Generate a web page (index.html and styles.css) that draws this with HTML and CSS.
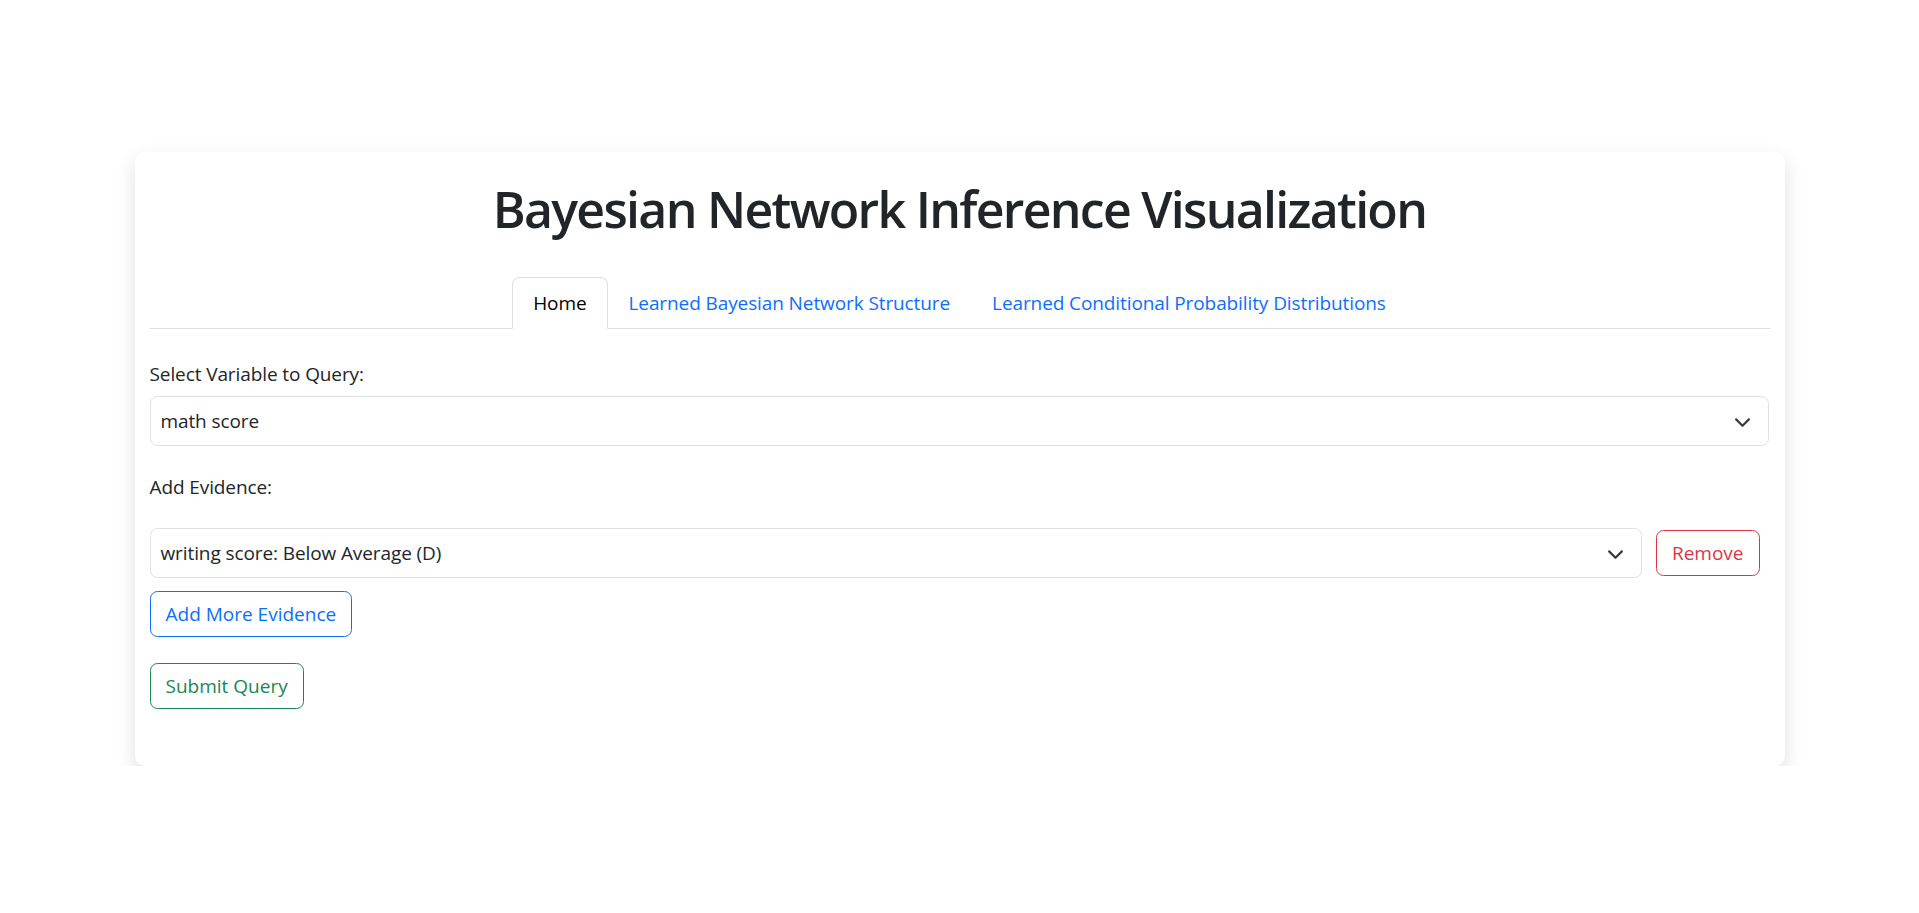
FILE: index.html
```html
<!DOCTYPE html>
<html lang="en">
<head>
<meta charset="utf-8">
<title>Bayesian Network Inference Visualization</title>
<link rel="stylesheet" href="styles.css">
</head>
<body>
<div class="page">
  <div class="card">
    <h1 class="title">Bayesian Network Inference Visualization</h1>
    <ul class="tabs">
      <li><a class="tab active">Home</a></li>
      <li><a class="tab">Learned Bayesian Network Structure</a></li>
      <li><a class="tab">Learned Conditional Probability Distributions</a></li>
    </ul>
    <div class="pane">
      <label class="label label-query">Select Variable to Query:</label>
      <div class="select select-main">
        <span class="select-text">math score</span>
        <svg class="chevron" width="17" height="13" viewBox="0 0 16 12"><path d="m2 4 6 6 6-6" fill="none" stroke="#343a40" stroke-width="2" stroke-linecap="round" stroke-linejoin="round"/></svg>
      </div>
      <div class="label label-evidence">Add Evidence:</div>
      <div class="evidence-row">
        <div class="select">
          <span class="select-text">writing score: Below Average (D)</span>
          <svg class="chevron" width="17" height="13" viewBox="0 0 16 12"><path d="m2 4 6 6 6-6" fill="none" stroke="#343a40" stroke-width="2" stroke-linecap="round" stroke-linejoin="round"/></svg>
        </div>
        <button class="btn btn-danger">Remove</button>
      </div>
      <button class="btn btn-primary">Add More Evidence</button>
      <button class="btn btn-success">Submit Query</button>
    </div>
  </div>
</div>
</body>
</html>
```

FILE: styles.css
```css
html, body {
  margin: 0;
  padding: 0;
  background: #fff;
}

body {
  font-family: "Open Sans", "Noto Sans", sans-serif;
  font-size: 19px;
  letter-spacing: -0.1px;
  line-height: 30px;
  color: #212529;
}

.page {
  width: 1650px;
  margin: 152px auto 0;
}

.card {
  background: #fff;
  border-radius: 10px;
  box-shadow: 0 8px 20px rgba(0, 0, 0, 0.13);
  padding: 27px 15px 57px;
}

.title {
  margin: 0 0 38px;
  font-size: 50px;
  line-height: 60px;
  font-weight: 600;
  letter-spacing: -1.7px;
  text-align: center;
  color: #212529;
}

.tabs {
  list-style: none;
  margin: 0;
  padding: 0;
  display: flex;
  justify-content: center;
  border-bottom: 1px solid #dee2e6;
}

.tab {
  display: block;
  padding: 10px 20px;
  border: 1px solid transparent;
  border-top-left-radius: 7.5px;
  border-top-right-radius: 7.5px;
  margin-bottom: -1px;
  color: #0d6efd;
  text-decoration: none;
  cursor: pointer;
}

.tab.active {
  color: #000;
  background: #fff;
  border-color: #dee2e6 #dee2e6 #fff;
}

.pane {
  padding-top: 30px;
  display: flex;
  flex-direction: column;
  align-items: flex-start;
}

.label {
  display: block;
}

.label-query {
  margin-bottom: 7px;
}

.label-evidence {
  margin-bottom: 26px;
}

.select {
  box-sizing: border-box;
  height: 50px;
  border: 1px solid #dee2e6;
  border-radius: 7.5px;
  background: #fff;
  padding: 0 17px 0 10px;
  display: flex;
  align-items: center;
  justify-content: space-between;
  color: #212529;
}

.select-main {
  align-self: stretch;
  margin-right: 1px;
  margin-bottom: 26px;
}

.chevron {
  display: block;
  flex: none;
}

.evidence-row {
  align-self: stretch;
  display: flex;
  align-items: center;
  margin-bottom: 13px;
}

.evidence-row .select {
  flex: 1;
}

.btn {
  font-family: inherit;
  font-size: 19px;
  letter-spacing: 0;
  line-height: 30px;
  padding: 7px 15px;
  background: transparent;
  border: 1px solid;
  border-radius: 7.5px;
  cursor: pointer;
}

.btn-danger {
  color: #dc3545;
  border-color: #dc3545;
  margin-left: 14px;
  margin-right: 10px;
}

.btn-primary {
  color: #0d6efd;
  border-color: #0d6efd;
}

.btn-success {
  color: #198754;
  border-color: #198754;
  margin-top: 26px;
}
```
